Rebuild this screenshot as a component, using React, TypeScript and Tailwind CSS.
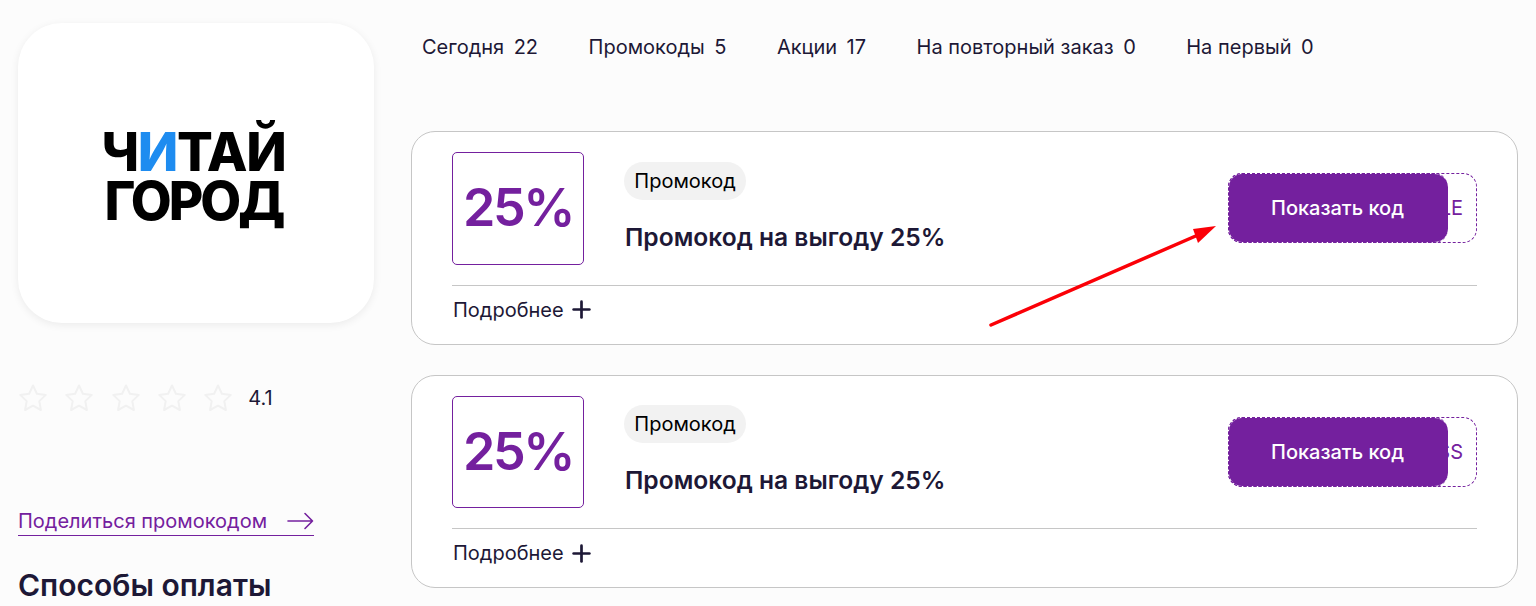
import { Plus } from 'lucide-react';

const tabs = [
  { label: 'Сегодня', count: 22 },
  { label: 'Промокоды', count: 5 },
  { label: 'Акции', count: 17 },
  { label: 'На повторный заказ', count: 0 },
  { label: 'На первый', count: 0 },
];

const Star = () => (
  <svg width="30" height="30" viewBox="0 0 30 30" fill="none" stroke="#f1f1f1" strokeWidth="2" strokeLinejoin="round">
    <path d="M15 2.5l3.9 8.2 8.9 1.2-6.5 6.2 1.6 8.9-7.9-4.3-7.9 4.3 1.6-8.9-6.5-6.2 8.9-1.2z" />
  </svg>
);

const PromoCard = ({ code }: { code: string }) => (
  <div className="h-[213.5px] rounded-[24px] border border-[#c6c6c6] bg-white px-10 pt-[19.7px]">
    <div className="flex h-[133.8px] border-b border-[#c6c6c6]">
      <div className="flex h-[112.6px] w-[132px] shrink-0 items-center justify-center rounded-[5px] border border-[#74209e] text-[52px] leading-none font-semibold tracking-[-2.5px] text-[#74209e] [font-optical-sizing:none]">
        25%
      </div>
      <div className="ml-10 flex flex-col items-start pt-[9.8px]">
        <span className="flex h-[38px] w-[122px] items-center justify-center rounded-[19px] bg-[#f2f2f2] text-[20px] text-black">
          Промокод
        </span>
        <span className="mt-[21px] ml-px text-[24.6px] leading-[32px] font-semibold whitespace-nowrap text-[#1d1836]">
          Промокод на выгоду 25%
        </span>
      </div>
      <div className="relative mt-[21px] ml-auto h-[70px] w-[249px] rounded-[14px] border border-dashed border-[#74209e] bg-white">
        <span className="absolute top-[21px] right-[13px] text-[20px] leading-[26px] text-[#74209e]">{code}</span>
        <button className="absolute -top-px -left-px flex h-[70px] w-[220px] items-center justify-center rounded-[14px] border border-r-0 border-dashed border-[#74209e] bg-[#74209e] bg-clip-padding pr-[2px] text-[20px] font-medium text-white">
          Показать код
        </button>
      </div>
    </div>
    <div className="mt-[10px] flex h-[28px] items-center gap-[4px] pl-px text-[20px] text-[#1d1836]">
      <span>Подробнее</span>
      <Plus size={27} strokeWidth={2.4} className="text-[#1d1836]" />
    </div>
  </div>
);

export default function App() {
  return (
    <div className="relative h-[606px] overflow-hidden bg-[#fcfcfc] font-['Inter',sans-serif]">
      <div className="flex items-start pl-[18px]">
        <aside className="w-[356px] shrink-0 pt-[23px]">
          <div className="flex h-[300px] flex-col items-center justify-center rounded-[44px] bg-white shadow-[0_2px_8px_rgba(0,0,0,0.07)]">
            <div className="mt-[8px] -ml-[5px] text-center text-[53px] leading-[49px] font-extrabold text-black">
              <div className="tracking-[-1.3px]">
                Ч<span className="text-[#1e8cf0]">И</span>ТАЙ
              </div>
              <div className="tracking-[-3px]">ГОРОД</div>
            </div>
          </div>
          <div className="mt-[60px] flex h-[30px] items-center">
            <div className="flex gap-[16.3px]">
              <Star />
              <Star />
              <Star />
              <Star />
              <Star />
            </div>
            <span className="ml-[15px] text-[20px] text-[#1d1836]">4.1</span>
          </div>
          <div className="mt-[90px] flex h-[33px] w-[296px] items-center justify-between border-b border-[#74209e] pt-[4px] text-[20px] text-[#74209e]">
            <span>Поделиться промокодом</span>
            <svg width="27" height="18" viewBox="0 0 27 18" fill="none" stroke="currentColor" strokeWidth="1.6" strokeLinecap="round" strokeLinejoin="round">
              <path d="M1 9H25.5M18 1.5L25.5 9L18 16.5" />
            </svg>
          </div>
          <h2 className="mt-[31px] text-[30px] leading-[36px] font-semibold whitespace-nowrap text-[#1d1836]">
            Способы оплаты
          </h2>
        </aside>

        <main className="ml-[37px] w-[1107px] shrink-0">
          <nav className="flex h-[95px] items-center gap-[50.5px] pb-[2px] pl-[11px] text-[20px] text-[#1d1836]">
            {tabs.map((t) => (
              <span key={t.label} className="flex gap-[9.5px] whitespace-nowrap">
                <span>{t.label}</span>
                <span>{t.count}</span>
              </span>
            ))}
          </nav>
          <div className="mt-[36.4px] flex flex-col gap-[30px]">
            <PromoCard code="LE" />
            <PromoCard code="SS" />
          </div>
        </main>
      </div>

      {/* красная стрелка поверх карточки */}
      <svg className="absolute top-0 left-0" width="1536" height="606" fill="none">
        <path d="M991 325L1198 235" stroke="#fb0007" strokeWidth="3.5" strokeLinecap="round" />
        <path d="M1216 226L1193 229L1198 243z" fill="#fb0007" />
      </svg>
    </div>
  );
}
